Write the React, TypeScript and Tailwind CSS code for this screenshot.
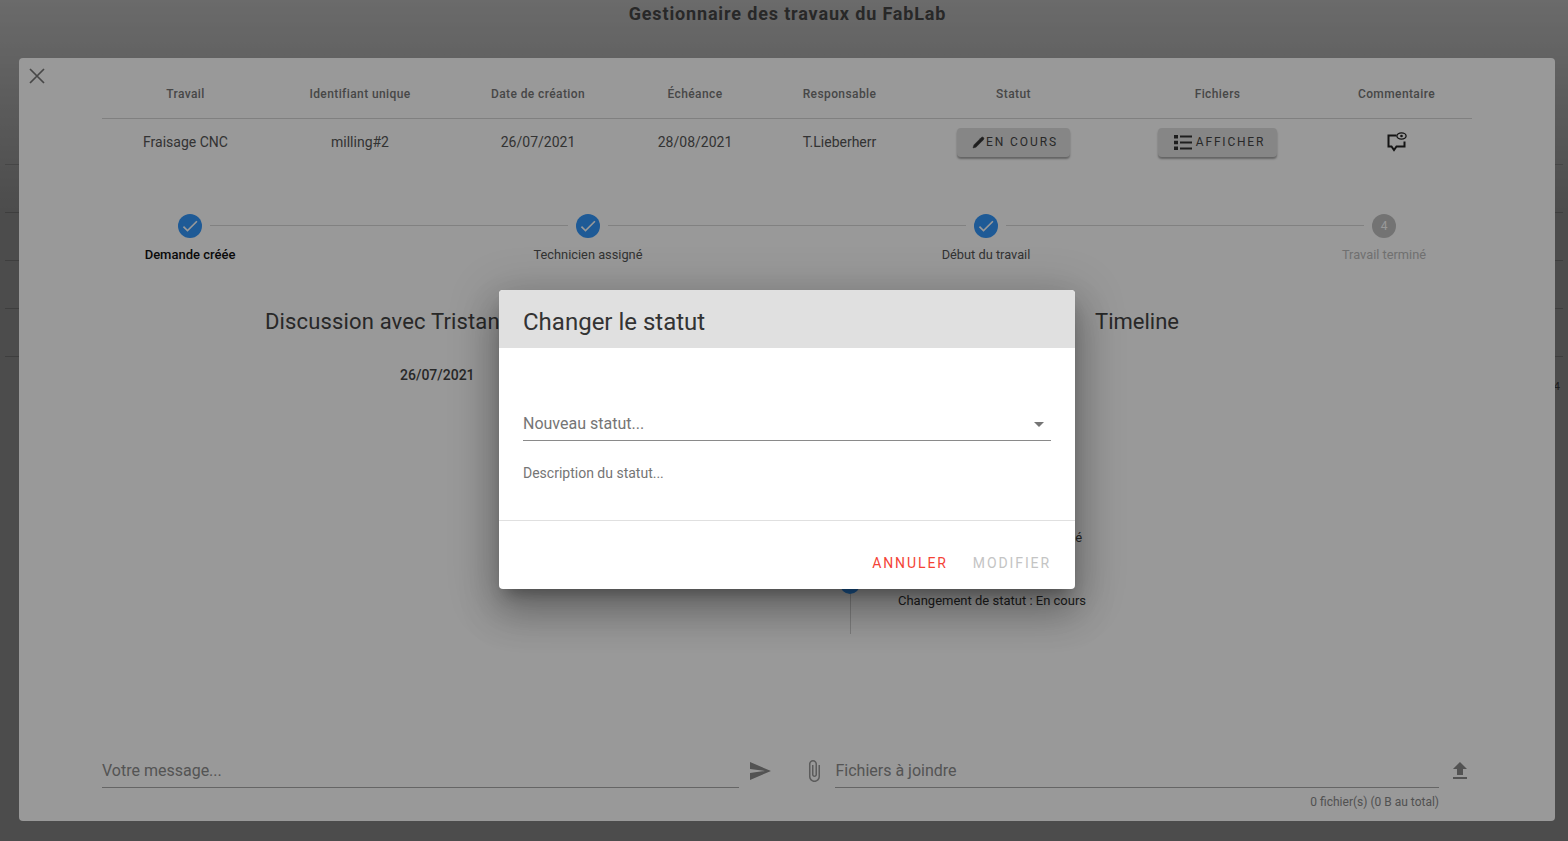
import React from 'react';
import { Pencil } from 'lucide-react';

const columns = [
  { title: 'Travail', value: 'Fraisage CNC' },
  { title: 'Identifiant unique', value: 'milling#2' },
  { title: 'Date de création', value: '26/07/2021' },
  { title: 'Échéance', value: '28/08/2021' },
  { title: 'Responsable', value: 'T.Lieberherr' },
];

const steps = ['Demande créée', 'Technicien assigné', 'Début du travail', 'Travail terminé'];

const App: React.FC = () => {
  return (
    <div className="relative h-[841px] w-[1568px] overflow-hidden bg-white font-['Roboto',sans-serif]">
      {/* page derriere les modals */}
      <div className="mt-[117px] px-[5px]">
        {[0, 1, 2, 3, 4].map((i) => (
          <div key={i} className="h-[48px] border-b border-[#d0d0d0]" />
        ))}
      </div>
      <div className="absolute right-[8px] top-[379px] text-[11px] text-[#666]">4</div>

      <div className="absolute inset-0 bg-black/50" />
      <div className="absolute inset-x-0 top-0 h-[210px] bg-gradient-to-b from-white/40 to-transparent" />
      <h1 className="absolute inset-x-0 top-[3px] pl-[7px] text-center text-[18px] font-bold leading-[22px] tracking-[0.85px] text-[#444]">
        Gestionnaire des travaux du FabLab
      </h1>

      {/* grand modal du travail */}
      <div className="absolute left-[19px] top-[58px] flex h-[763px] w-[1536px] flex-col rounded bg-white px-[83px] pt-[18px] text-[#444]">
        <button className="absolute left-[5px] top-[5px] text-[#777]">
          <svg viewBox="0 0 26 26" className="h-[26px] w-[26px]" fill="none" stroke="currentColor" strokeWidth={1.7}>
            <path d="M6 6l14 14M20 6L6 20" />
          </svg>
        </button>

        <div className="grid grid-cols-[167px_182px_174px_140px_149px_199px_209px_149px] border-b border-[#d6d6d6] pb-[6px] text-center text-[12px] font-medium leading-[36px] tracking-[0.4px] text-[#777]">
          {columns.map((c) => (
            <div key={c.title}>{c.title}</div>
          ))}
          <div>Statut</div>
          <div>Fichiers</div>
          <div>Commentaire</div>
        </div>

        <div className="grid grid-cols-[167px_182px_174px_140px_149px_199px_209px_149px] items-center pt-[8px] text-center text-[14px] leading-[30px] text-[#555]">
          {columns.map((c) => (
            <div key={c.title}>{c.value}</div>
          ))}
          <div className="flex justify-center">
            <button className="flex h-[29px] w-[113px] items-center justify-center gap-[1px] rounded bg-[#e0e0e0] pl-[3px] text-[12px] tracking-[1.9px] text-[#444] shadow-[0_2px_2px_rgba(0,0,0,0.35)]">
              <Pencil size={13} fill="#333" strokeWidth={1} />
              EN COURS
            </button>
          </div>
          <div className="flex justify-center">
            <button className="flex h-[29px] w-[119px] items-center justify-center gap-[4px] rounded bg-[#e0e0e0] pl-[4px] text-[12px] tracking-[1.8px] text-[#444] shadow-[0_2px_2px_rgba(0,0,0,0.35)]">
              <svg viewBox="0 0 18 15" className="h-[15px] w-[18px]" fill="#333">
                <path d="M0 0h4v3.4H0zM0 5.8h4v3.4H0zM0 11.6h4V15H0zM6 .6h12v2H6zM6 6.5h12v2H6zM6 12.4h12v2H6z" />
              </svg>
              AFFICHER
            </button>
          </div>
          <div className="flex justify-center text-[#222]">
            <svg viewBox="0 0 20 20" className="h-[20px] w-[20px]" fill="none" stroke="currentColor" strokeWidth={2}>
              <path d="M9.5 3.5H1.5V14.5H4.5L7 18L9.5 14.5H17.5V9.5" />
              <ellipse cx={14.5} cy={4} rx={4.6} ry={3.1} strokeWidth={1.3} />
              <circle cx={14.5} cy={4} r={1.3} fill="currentColor" stroke="none" />
            </svg>
          </div>
        </div>

        <div className="ml-[76px] mt-[57px] flex w-[1218px]">
          {steps.map((label, i) => (
            <React.Fragment key={label}>
              <div className="flex w-[24px] flex-col items-center">
                <div
                  className={`flex h-[24px] w-[24px] items-center justify-center rounded-full text-[12px] text-white ${
                    i < 3 ? 'bg-[#3296fa]' : 'bg-[#c0c0c0]'
                  }`}
                >
                  {i < 3 ? (
                    <svg viewBox="0 0 24 24" className="h-[20px] w-[20px]" fill="white">
                      <path d="M9 16.17 4.83 12l-1.42 1.41L9 19 21 7l-1.41-1.41z" />
                    </svg>
                  ) : (
                    '4'
                  )}
                </div>
                <div
                  className={`mt-[7px] whitespace-nowrap leading-[20px] ${
                    i === 0
                      ? 'text-[13px] font-medium text-[#111]'
                      : i < 3
                        ? 'text-[12.8px] text-[#555]'
                        : 'text-[12.8px] text-[#bbb]'
                  }`}
                >
                  {label}
                </div>
              </div>
              {i < 3 && <div className="mx-[8px] mt-[11px] h-px flex-1 bg-[#d8d8d8]" />}
            </React.Fragment>
          ))}
        </div>

        <div className="relative flex-1">
          <div className="absolute left-[163px] top-[41px] text-[22px] leading-[32px] tracking-[0.15px]">Discussion avec Tristan</div>
          <div className="absolute left-[993px] top-[41px] text-[22px] leading-[32px]">Timeline</div>
          <div className="absolute left-[298px] top-[100px] text-[14px] font-medium leading-[20px]">26/07/2021</div>
          <div className="absolute left-[796px] top-[265px] text-[13px] leading-[16px]">Changement de statut : Assigné</div>
          <div className="absolute left-[738px] top-[309px] h-[20px] w-[20px] rounded-full bg-[#3296fa]" />
          <div className="absolute left-[748px] top-[329px] h-[40px] w-px bg-[#d0d0d0]" />
          <div className="absolute left-[796px] top-[328px] text-[13px] leading-[16px] text-[#333]">Changement de statut : En cours</div>
        </div>

        <div className="flex items-start pb-[10px]">
          <div className="flex h-[36px] w-[637px] items-center border-b border-[#a8a8a8] pt-[2px] text-[16px] text-[#8c8c8c]">Votre message...</div>
          <div className="ml-[9px] mt-[7px] h-[24px] w-[24px] text-[#8a8a8a]">
            <svg viewBox="0 0 24 24" fill="currentColor"><path d="M2.01 21 23 12 2.01 3 2 10l15 2-15 2z" /></svg>
          </div>
          <div className="ml-[30px] mt-[7px] h-[24px] w-[24px] text-[#999]">
            <svg viewBox="0 0 24 24" fill="currentColor"><path d="M16.5 6v11.5c0 2.21-1.79 4-4 4s-4-1.79-4-4V5c0-1.38 1.12-2.5 2.5-2.5s2.5 1.12 2.5 2.5v10.5c0 .55-.45 1-1 1s-1-.45-1-1V6H10v9.5c0 1.38 1.12 2.5 2.5 2.5s2.5-1.12 2.5-2.5V5c0-2.21-1.79-4-4-4S7 2.79 7 5v12.5c0 3.04 2.46 5.5 5.5 5.5s5.5-2.46 5.5-5.5V6z" /></svg>
          </div>
          <div className="ml-[10px] w-[604px]">
            <div className="flex h-[36px] items-center border-b border-[#a8a8a8] pt-[2px] text-[16px] text-[#8c8c8c]">Fichiers à joindre</div>
            <div className="pt-[5px] text-right text-[12px] text-[#888]">0 fichier(s) (0 B au total)</div>
          </div>
          <div className="ml-[9px] mt-[7px] h-[24px] w-[24px] text-[#8a8a8a]">
            <svg viewBox="0 0 24 24" fill="currentColor"><path d="M5 20h14v-2H5zm0-10h4v6h6v-6h4l-7-7z" /></svg>
          </div>
        </div>
      </div>

      <div className="absolute inset-0 bg-black/40" />

      {/* dialogue changement de statut */}
      <div className="absolute left-[499px] top-[290px] flex h-[299px] w-[576px] flex-col overflow-hidden rounded bg-white shadow-[0_11px_15px_-7px_rgba(0,0,0,0.3),0_24px_38px_3px_rgba(0,0,0,0.2),0_9px_46px_8px_rgba(0,0,0,0.18)]">
        <div className="flex h-[58px] items-center bg-[#e0e0e0] px-[24px] pt-[6px] text-[24px] text-[#333]">Changer le statut</div>
        <div className="h-[173px] border-b border-[#e0e0e0] px-[24px] pt-[60px]">
          <div className="flex h-[33px] items-center justify-between border-b border-[#8a8a8a] text-[16px] text-[#757575]">
            <span>Nouveau statut...</span>
            <svg viewBox="0 0 24 24" className="h-[24px] w-[24px]" fill="#757575"><path d="M7 10l5 5 5-5z" /></svg>
          </div>
          <div className="pt-[22px] text-[14px] leading-[20px] text-[#757575]">Description du statut...</div>
        </div>
        <div className="flex flex-1 items-center justify-end gap-[25px] px-[24px] pt-[16px] text-[14px] tracking-[1.9px]">
          <span className="text-[#f44336]">ANNULER</span>
          <span className="text-[#c4c4c4]">MODIFIER</span>
        </div>
      </div>
    </div>
  );
};

export default App;
